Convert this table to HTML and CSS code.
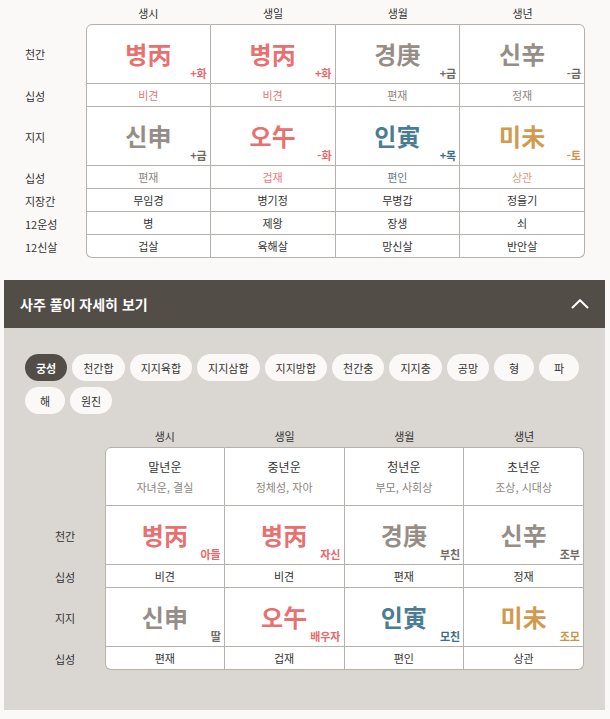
FILE: index.html
```html
<!DOCTYPE html>
<html lang="ko">
<head>
<meta charset="utf-8">
<title>사주</title>
<link rel="stylesheet" href="styles.css">
</head>
<body>
<div class="top">
  <div class="chart chart-top">
    <div class="hd"></div><div class="hd">생시</div><div class="hd">생일</div><div class="hd">생월</div><div class="hd">생년</div>

    <div class="lbl">천간</div>
    <div class="cell big c1 r1 tl"><span class="ch fire">병丙</span><span class="tag tfire">+화</span></div>
    <div class="cell big r1"><span class="ch fire">병丙</span><span class="tag tfire">+화</span></div>
    <div class="cell big r1"><span class="ch metal">경庚</span><span class="tag tmetal">+금</span></div>
    <div class="cell big r1 tr"><span class="ch metal">신辛</span><span class="tag tmetal">-금</span></div>

    <div class="lbl">십성</div>
    <div class="cell c1 s-fire">비견</div>
    <div class="cell s-fire">비견</div>
    <div class="cell s-metal">편재</div>
    <div class="cell s-metal">정재</div>

    <div class="lbl">지지</div>
    <div class="cell big c1"><span class="ch metal">신申</span><span class="tag tmetal">+금</span></div>
    <div class="cell big"><span class="ch fire">오午</span><span class="tag tfire">-화</span></div>
    <div class="cell big"><span class="ch wood">인寅</span><span class="tag twood">+목</span></div>
    <div class="cell big"><span class="ch earth">미未</span><span class="tag tearth">-토</span></div>

    <div class="lbl">십성</div>
    <div class="cell c1 s-metal">편재</div>
    <div class="cell s-pink">겁재</div>
    <div class="cell s-wood">편인</div>
    <div class="cell s-earth">상관</div>

    <div class="lbl">지장간</div>
    <div class="cell c1">무임경</div>
    <div class="cell">병기정</div>
    <div class="cell">무병갑</div>
    <div class="cell">정을기</div>

    <div class="lbl">12운성</div>
    <div class="cell c1">병</div>
    <div class="cell">제왕</div>
    <div class="cell">장생</div>
    <div class="cell">쇠</div>

    <div class="lbl">12신살</div>
    <div class="cell c1 bl">겁살</div>
    <div class="cell">육해살</div>
    <div class="cell">망신살</div>
    <div class="cell br">반안살</div>
  </div>
</div>

<div class="detail">
  <div class="bar">
    <span class="bar-title">사주 풀이 자세히 보기</span>
    <svg class="chev" width="18" height="10" viewBox="0 0 18 10"><polyline points="1,9 9,1.2 17,9" fill="none" stroke="#ffffff" stroke-width="2"/></svg>
  </div>
  <div class="panel">
    <div class="pills">
      <span class="pill active">궁성</span>
      <span class="pill">천간합</span>
      <span class="pill">지지육합</span>
      <span class="pill">지지삼합</span>
      <span class="pill">지지방합</span>
      <span class="pill">천간충</span>
      <span class="pill">지지충</span>
      <span class="pill">공망</span>
      <span class="pill">형</span>
      <span class="pill">파</span>
      <span class="pill">해</span>
      <span class="pill">원진</span>
    </div>

    <div class="chart chart-bottom">
      <div class="hd"></div><div class="hd">생시</div><div class="hd">생일</div><div class="hd">생월</div><div class="hd">생년</div>

      <div class="lbl"></div>
      <div class="cell head c1 r1 tl"><span class="h1">말년운</span><span class="h2">자녀운, 결실</span></div>
      <div class="cell head r1"><span class="h1">중년운</span><span class="h2">정체성, 자아</span></div>
      <div class="cell head r1"><span class="h1">청년운</span><span class="h2">부모, 사회상</span></div>
      <div class="cell head r1 tr"><span class="h1">초년운</span><span class="h2">조상, 시대상</span></div>

      <div class="lbl">천간</div>
      <div class="cell big c1"><span class="ch fire">병丙</span><span class="tag tfire">아들</span></div>
      <div class="cell big"><span class="ch fire">병丙</span><span class="tag tfire">자신</span></div>
      <div class="cell big"><span class="ch metal">경庚</span><span class="tag tmetal">부친</span></div>
      <div class="cell big"><span class="ch metal">신辛</span><span class="tag tmetal">조부</span></div>

      <div class="lbl">십성</div>
      <div class="cell c1">비견</div>
      <div class="cell">비견</div>
      <div class="cell">편재</div>
      <div class="cell">정재</div>

      <div class="lbl">지지</div>
      <div class="cell big c1"><span class="ch metal">신申</span><span class="tag tmetal">딸</span></div>
      <div class="cell big"><span class="ch fire">오午</span><span class="tag tfire">배우자</span></div>
      <div class="cell big"><span class="ch wood">인寅</span><span class="tag twood">모친</span></div>
      <div class="cell big"><span class="ch earth">미未</span><span class="tag tearth">조모</span></div>

      <div class="lbl">십성</div>
      <div class="cell c1 bl">편재</div>
      <div class="cell">겁재</div>
      <div class="cell">편인</div>
      <div class="cell br">상관</div>
    </div>
  </div>
</div>
</body>
</html>
```

FILE: styles.css
```css
* { box-sizing: border-box; }

html, body {
  margin: 0;
  padding: 0;
  background: #fbf9f7;
  font-family: "Noto Sans CJK KR", "Noto Sans", sans-serif;
  color: #333;
}

.top {
  padding: 0 25px 0 25px;
}

.chart {
  display: grid;
}

.chart-top {
  grid-template-columns: 61px repeat(4, 1fr);
  grid-template-rows: 24px 60px 23px 59px 23px 23px 23px 23px;
}

.chart-bottom {
  grid-template-columns: 80px repeat(4, 1fr);
  grid-template-rows: 24px 59px 59px 23px 59px 23px;
}

.hd {
  display: flex;
  align-items: center;
  justify-content: center;
  font-size: 11px;
  color: #333;
  padding-top: 2px;
}

.lbl {
  display: flex;
  align-items: center;
  font-size: 11px;
  color: #333;
}

.chart-bottom .lbl {
  justify-content: center;
}

.cell {
  position: relative;
  display: flex;
  align-items: center;
  justify-content: center;
  background: #ffffff;
  border-right: 1px solid #b7b1ab;
  border-bottom: 1px solid #b7b1ab;
  font-size: 11px;
  color: #333;
}

.cell.c1 { border-left: 1px solid #b7b1ab; }
.cell.r1 { border-top: 1px solid #b7b1ab; }
.cell.tl { border-top-left-radius: 6px; }
.cell.tr { border-top-right-radius: 6px; }
.cell.bl { border-bottom-left-radius: 6px; }
.cell.br { border-bottom-right-radius: 6px; }

.ch {
  font-size: 24px;
  font-weight: 700;
  line-height: 1;
  letter-spacing: 0;
}

.tag {
  position: absolute;
  right: 3px;
  bottom: 3px;
  font-size: 11px;
  font-weight: 700;
  line-height: 14px;
}

.fire { color: #e8706f; }
.metal { color: #958d86; }
.wood { color: #4b7d92; }
.earth { color: #d09a4f; }

.tfire { color: #e5696b; }
.tmetal { color: #6f6862; }
.twood { color: #3d6f84; }
.tearth { color: #cc9448; }

.s-fire { color: #e47777; }
.s-pink { color: #e97685; }
.s-metal { color: #8b847e; }
.s-wood { color: #637985; }
.s-earth { color: #d59c7a; }

.head {
  flex-direction: column;
}

.h1 {
  font-size: 12px;
  line-height: 20px;
  color: #333;
}

.h2 {
  font-size: 11px;
  line-height: 20px;
  color: #8a847e;
}

.detail {
  margin: 22px 5px 0 4px;
}

.bar {
  height: 48px;
  background: #524d47;
  display: flex;
  align-items: center;
  justify-content: space-between;
  padding: 0 16px 0 16px;
}

.bar-title {
  color: #ffffff;
  font-size: 14px;
  font-weight: 700;
}

.chev {
  display: block;
}

.panel {
  background: #dad7d2;
  padding: 26px 21px 40px 21px;
}

.pills {
  display: flex;
  flex-wrap: wrap;
  gap: 6px 5px;
  margin-bottom: 9px;
}

.pill {
  height: 27px;
  min-width: 40px;
  padding: 0 11px;
  border-radius: 14px;
  background: #fbf9f7;
  color: #333;
  font-size: 11px;
  display: inline-flex;
  align-items: center;
  justify-content: center;
}

.pill.active {
  background: #524d47;
  color: #ffffff;
  font-weight: 700;
}
```
